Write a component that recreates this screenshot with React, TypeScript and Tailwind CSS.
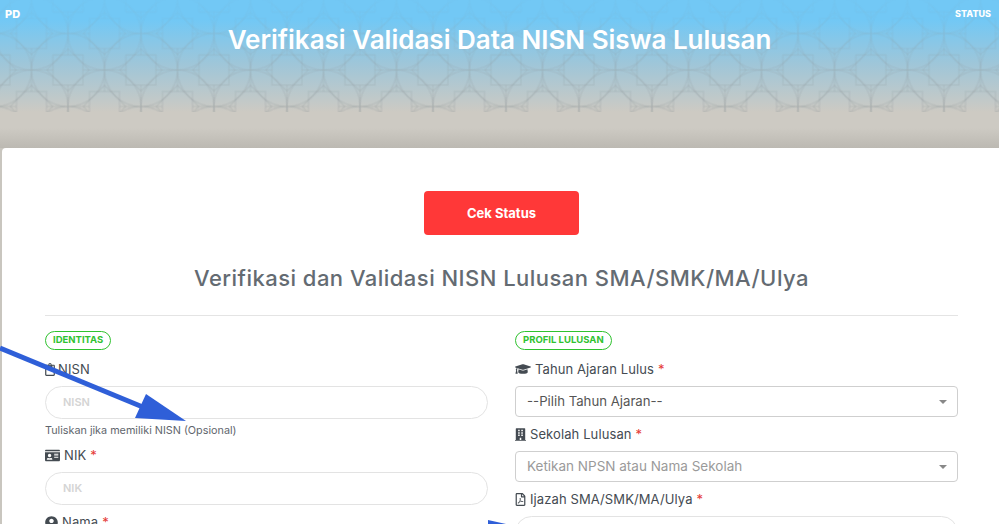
import React from 'react';
import { FaGraduationCap, FaBuilding, FaRegFilePdf, FaIdCard, FaUserCircle, FaRegClipboard } from 'react-icons/fa';

const font = "font-['Inter','Liberation_Sans',sans-serif]";

// one lattice knot: a star of two squares inside a big ring
const Knot = ({ x, y }: { x: number; y: number }) => (
  <g transform={`translate(${x} ${y})`}>
    <rect x="-15" y="-15" width="30" height="30" />
    <rect x="-15" y="-15" width="30" height="30" transform="rotate(45)" />
    <circle r="36.5" />
    <path d="M-15 0 H-36 M15 0 H36 M0 -15 V-36 M0 15 V36" />
  </g>
);

const Pattern = () => (
  <svg className="absolute left-0 top-0 h-[112px] w-full" aria-hidden="true">
    <defs>
      <pattern id="girih" width="73" height="73" patternUnits="userSpaceOnUse" x="31.5" y="33.5">
        <g fill="none" stroke="#8a9296" strokeOpacity="0.24" strokeWidth="1.2">
          <Knot x={36.5} y={36.5} />
          <Knot x={0} y={0} />
          <Knot x={73} y={0} />
          <Knot x={0} y={73} />
          <Knot x={73} y={73} />
        </g>
      </pattern>
      <linearGradient id="fade" x1="0" y1="0" x2="0" y2="1">
        <stop offset="0" stopColor="#fff" stopOpacity="0.1" />
        <stop offset="0.4" stopColor="#fff" stopOpacity="0.55" />
        <stop offset="1" stopColor="#fff" stopOpacity="1" />
      </linearGradient>
      <mask id="fadeMask">
        <rect width="100%" height="100%" fill="url(#fade)" />
      </mask>
    </defs>
    <rect width="100%" height="100%" fill="url(#girih)" mask="url(#fadeMask)" />
  </svg>
);

const Arrows = () => (
  <svg className="absolute left-0 top-0 h-[524px] w-[999px]" aria-hidden="true">
    <path d="M0 348 L150 410" stroke="#2f5fd8" strokeWidth="5" fill="none" />
    <path d="M186 421 L135 418 L146 394 Z" fill="#2f5fd8" />
    <path d="M488 520 L506 524 L488 524 Z" fill="#2f5fd8" />
  </svg>
);

const Badge = ({ children }: { children: React.ReactNode }) => (
  <div className="flex h-[19px] w-fit items-center rounded-full border border-[#2fc22f] px-[7px] text-[9.5px] font-bold text-[#2fc22f]">
    {children}
  </div>
);

const Label = ({ icon, text, required }: { icon: React.ReactNode; text: string; required?: boolean }) => (
  <div className="flex h-[20px] items-center gap-[4px] text-[13px] leading-none tracking-[0.1px] text-[#444b52]">
    {icon}
    <span>{text}</span>
    {required && <span className="text-[#e53935]">*</span>}
  </div>
);

const RoundInput = ({ placeholder }: { placeholder: string }) => (
  <div className="flex h-[33px] items-center rounded-[17px] border border-[#e3e3e3] bg-white px-[17px] text-[11px] font-semibold text-[#d4d4d4]">
    {placeholder}
  </div>
);

const SelectBox = ({ text, muted }: { text: string; muted?: boolean }) => (
  <div className="flex h-[31px] items-center justify-between rounded-[4px] border border-[#cfcfcf] bg-white pl-[11px] pr-[10px]">
    <span className={muted ? 'text-[13.5px] text-[#9a9a9a]' : 'text-[13.2px] text-[#555]'}>{text}</span>
    <span className="h-0 w-0 border-x-[4px] border-t-[4px] border-x-transparent border-t-[#888]" />
  </div>
);

export default function App() {
  return (
    <div className={`relative h-[524px] w-[999px] overflow-hidden bg-[#c9c6bf] ${font}`}>
      <header className="relative h-[148px] bg-[linear-gradient(180deg,#72c8f5_0px,#72c8f5_20px,#a0c6d8_65px,#cdcac3_112px,#cdcac3_128px,#bcb9b2_148px)]">
        <Pattern />
        <div className="relative flex items-center justify-between px-[5px] pt-[8px] font-extrabold leading-[12px] text-white">
          <span className="text-[11px]">PD</span>
          <span className="pr-[3px] text-[9px]">STATUS</span>
        </div>
        <h1 className="relative mt-[6px] text-center text-[26px] font-semibold leading-[28px] text-white">
          Verifikasi Validasi Data NISN Siswa Lulusan
        </h1>
      </header>

      <main className="ml-[2px] h-[376px] rounded-tl-[4px] bg-white pl-[43px] pr-[41px]">
        <div className="flex justify-center pt-[43px]">
          <button className="h-[44px] w-[155px] rounded-[4px] bg-[#ff3838] pt-[1px] text-[13px] font-bold text-white">
            Cek Status
          </button>
        </div>
        <h2 className="mt-[28px] text-center text-[22px] font-[450] leading-[30px] tracking-[0.47px] text-[#646b72]">
          Verifikasi dan Validasi NISN Lulusan SMA/SMK/MA/Ulya
        </h2>
        <hr className="mt-[22px] border-[#e4e4e4]" />

        <div className="mt-[15px] grid grid-cols-2 gap-x-[27px]">
          <div>
            <Badge>IDENTITAS</Badge>
            <div className="mt-[9px]">
              <Label icon={<FaRegClipboard className="mr-[-1px] h-[13px] w-[10px]" />} text="NISN" />
            </div>
            <div className="mt-[7px]">
              <RoundInput placeholder="NISN" />
            </div>
            <p className="mt-[6px] text-[10.8px] leading-[12px] text-[#5f666d]">Tuliskan jika memiliki NISN (Opsional)</p>
            <div className="mt-[8px]">
              <Label icon={<FaIdCard className="h-[15px] w-[15px]" />} text="NIK" required />
            </div>
            <div className="mt-[7px]">
              <RoundInput placeholder="NIK" />
            </div>
            <div className="mt-[7px]">
              <Label icon={<FaUserCircle className="h-[13px] w-[13px]" />} text="Nama" required />
            </div>
          </div>
          <div>
            <Badge>PROFIL LULUSAN</Badge>
            <div className="mt-[9px]">
              <Label icon={<FaGraduationCap className="h-[16px] w-[16px]" />} text="Tahun Ajaran Lulus" required />
            </div>
            <div className="mt-[7px]">
              <SelectBox text="--Pilih Tahun Ajaran--" />
            </div>
            <div className="mt-[7px]">
              <Label icon={<FaBuilding className="h-[13px] w-[11px]" />} text="Sekolah Lulusan" required />
            </div>
            <div className="mt-[7px]">
              <SelectBox text="Ketikan NPSN atau Nama Sekolah" muted />
            </div>
            <div className="mt-[7px]">
              <Label icon={<FaRegFilePdf className="h-[13px] w-[11px]" />} text="Ijazah SMA/SMK/MA/Ulya" required />
            </div>
            <div className="mt-[7px]">
              <RoundInput placeholder="" />
            </div>
          </div>
        </div>
      </main>
      <Arrows />
    </div>
  );
}
